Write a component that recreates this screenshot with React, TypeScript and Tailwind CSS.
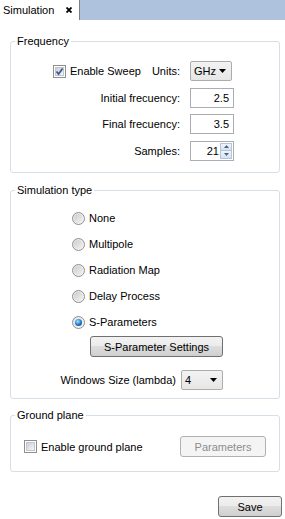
import React from 'react'

function Check({ checked }: { checked?: boolean }) {
  return (
    <span className="relative flex h-[13px] w-[13px] shrink-0 items-center justify-center border border-[#8f8f8f] bg-white">
      <span className="h-[9px] w-[9px] border border-[#c2c6cc] bg-linear-to-br from-[#cbcfd5] to-[#f7f7f7]" />
      {checked && (
        <svg className="absolute left-[1px] top-[1px]" width="9" height="9" viewBox="0 0 9 9">
          <path d="M1.5 4.5 L3.6 7 L7.6 1.5" fill="none" stroke="#3d5a98" strokeWidth="1.8" />
        </svg>
      )}
    </span>
  )
}

function Radio({ checked }: { checked?: boolean }) {
  return (
    <span className="flex h-[13px] w-[13px] shrink-0 items-center justify-center rounded-full border border-[#8e8f8f] bg-linear-to-br from-[#e2e2e2] to-[#f8f8f8]">
      {checked ? (
        <span className="h-[7px] w-[7px] rounded-full bg-[radial-gradient(circle_at_40%_35%,#a6e8ff,#1a72c4_55%,#0b3b78)]" />
      ) : (
        <span className="h-[9px] w-[9px] rounded-full bg-linear-to-br from-[#cdcdcd] to-[#f2f2f2]" />
      )}
    </span>
  )
}

function Arrow() {
  return (
    <svg width="7" height="4" viewBox="0 0 7 4">
      <path d="M0 0 H7 L3.5 4 Z" fill="#000" />
    </svg>
  )
}

function Combo({ value, className = '' }: { value: string; className?: string }) {
  return (
    <div className={`flex h-[20px] shrink-0 items-center justify-between rounded-[2px] border border-[#acacac] bg-linear-to-b from-[#f3f3f3] to-[#e6e6e6] pl-[3px] pr-[5px] ${className}`}>
      <span>{value}</span>
      <Arrow />
    </div>
  )
}

function Field({ value }: { value: string }) {
  return (
    <div className="flex h-[20px] w-[44px] items-center justify-end border border-[#abadb3] bg-white pr-[4px]">
      {value}
    </div>
  )
}

function Spin({ value }: { value: string }) {
  return (
    <div className="flex h-[20px] w-[44px] items-center justify-end border border-[#abadb3] bg-white pr-[1px]">
      <span className="pr-[1px]">{value}</span>
      <div className="flex h-[16px] w-[12px] flex-col">
        {/* up / down */}
        <div className="flex flex-1 items-center justify-center border border-[#b6c4d8] bg-linear-to-b from-[#f1f5fb] to-[#d5e1f0]">
          <svg width="5" height="3" viewBox="0 0 5 3"><path d="M0 3 H5 L2.5 0 Z" fill="#4d6185" /></svg>
        </div>
        <div className="flex flex-1 items-center justify-center border border-t-0 border-[#b6c4d8] bg-linear-to-b from-[#f1f5fb] to-[#d5e1f0]">
          <svg width="5" height="3" viewBox="0 0 5 3"><path d="M0 0 H5 L2.5 3 Z" fill="#4d6185" /></svg>
        </div>
      </div>
    </div>
  )
}

function Button({ children, disabled, className = '' }: { children: React.ReactNode; disabled?: boolean; className?: string }) {
  return (
    <div
      className={`flex h-[21px] items-center justify-center rounded-[3px] border ${
        disabled
          ? 'border-[#adb2b5] bg-[#f4f4f4] text-[#8d8d8d]'
          : 'border-[#707070] bg-[linear-gradient(#f2f2f2,#ebebeb_50%,#dddddd_50%,#cfcfcf)] text-black'
      } ${className}`}
    >
      {children}
    </div>
  )
}

function Group({ title, className = '', children }: { title: string; className?: string; children: React.ReactNode }) {
  return (
    <fieldset className={`ml-[10px] w-[270px] rounded-[3px] border border-[#d5dfe5] ${className}`}>
      <legend className="ml-[4px] px-[2px] text-[11px] leading-[14px]">{title}</legend>
      {children}
    </fieldset>
  )
}

export default function App() {
  const radios = ['None', 'Multipole', 'Radiation Map', 'Delay Process', 'S-Parameters']

  return (
    <div className="h-[519px] w-[285px] bg-white font-['Liberation_Sans',Arial,sans-serif] text-[11px] leading-[14px] text-black">
      {/* Tabs */}
      <div className="flex h-[20px]">
        <div className="flex w-[79px] items-center pl-[3px]">
          <span>Simulation</span>
          <svg className="ml-[12px]" width="6" height="6" viewBox="0 0 6 6">
            <path d="M0.5 0.5 L5.5 5.5 M5.5 0.5 L0.5 5.5" stroke="#000" strokeWidth="1.8" />
          </svg>
        </div>
        <div className="flex-1 border-l border-[#7d7d7d] bg-[#aec2dd]" />
      </div>

      {/* Frequency */}
      <Group title="Frequency" className="mt-[14px] pt-[13px] pb-[11.5px]">
        <div className="grid grid-cols-[169px_44px] gap-x-[10px] gap-y-[6.5px]">
          <div className="flex h-[20px] items-center justify-end">
            <Check checked />
            <span className="ml-[4px]">Enable Sweep</span>
            <span className="ml-[11px]">Units:</span>
          </div>
          <div className="flex items-center">
            <Combo value="GHz" className="w-[42px]" />
          </div>

          <div className="flex h-[20px] items-center justify-end">Initial frecuency:</div>
          <Field value="2.5" />

          <div className="flex h-[20px] items-center justify-end">Final frecuency:</div>
          <Field value="3.5" />

          <div className="flex h-[20px] items-center justify-end">Samples:</div>
          <Spin value="21" />
        </div>
      </Group>

      {/* Simulation type */}
      <Group title="Simulation type" className="mt-[10px] pt-[11px] pb-[8px]">
        <div className="flex flex-col gap-[6px] pl-[61px]">
          {radios.map((r, i) => (
            <div key={r} className="flex h-[20px] items-center gap-[4px]">
              <Radio checked={i === radios.length - 1} />
              <span>{r}</span>
            </div>
          ))}
        </div>
        <Button className="ml-[79px] mt-[4px] w-[133px]">S-Parameter Settings</Button>
        <div className="mt-[13px] flex h-[20px] items-center gap-[5px]">
          <span className="w-[165px] whitespace-nowrap text-right">Windows Size (lambda)</span>
          <Combo value="4" className="w-[42px]" />
        </div>
      </Group>

      {/* Ground plane */}
      <Group title="Ground plane" className="mt-[9px] pt-[14px] pb-[14px]">
        <div className="flex h-[21px] items-center pl-[13px]">
          <Check />
          <span className="ml-[4px]">Enable ground plane</span>
          <Button disabled className="ml-auto mr-[13px] w-[86px]">Parameters</Button>
        </div>
      </Group>

      <div className="mt-[24px] flex justify-end pr-[3px]">
        <Button className="w-[64px]">Save</Button>
      </div>
    </div>
  )
}
